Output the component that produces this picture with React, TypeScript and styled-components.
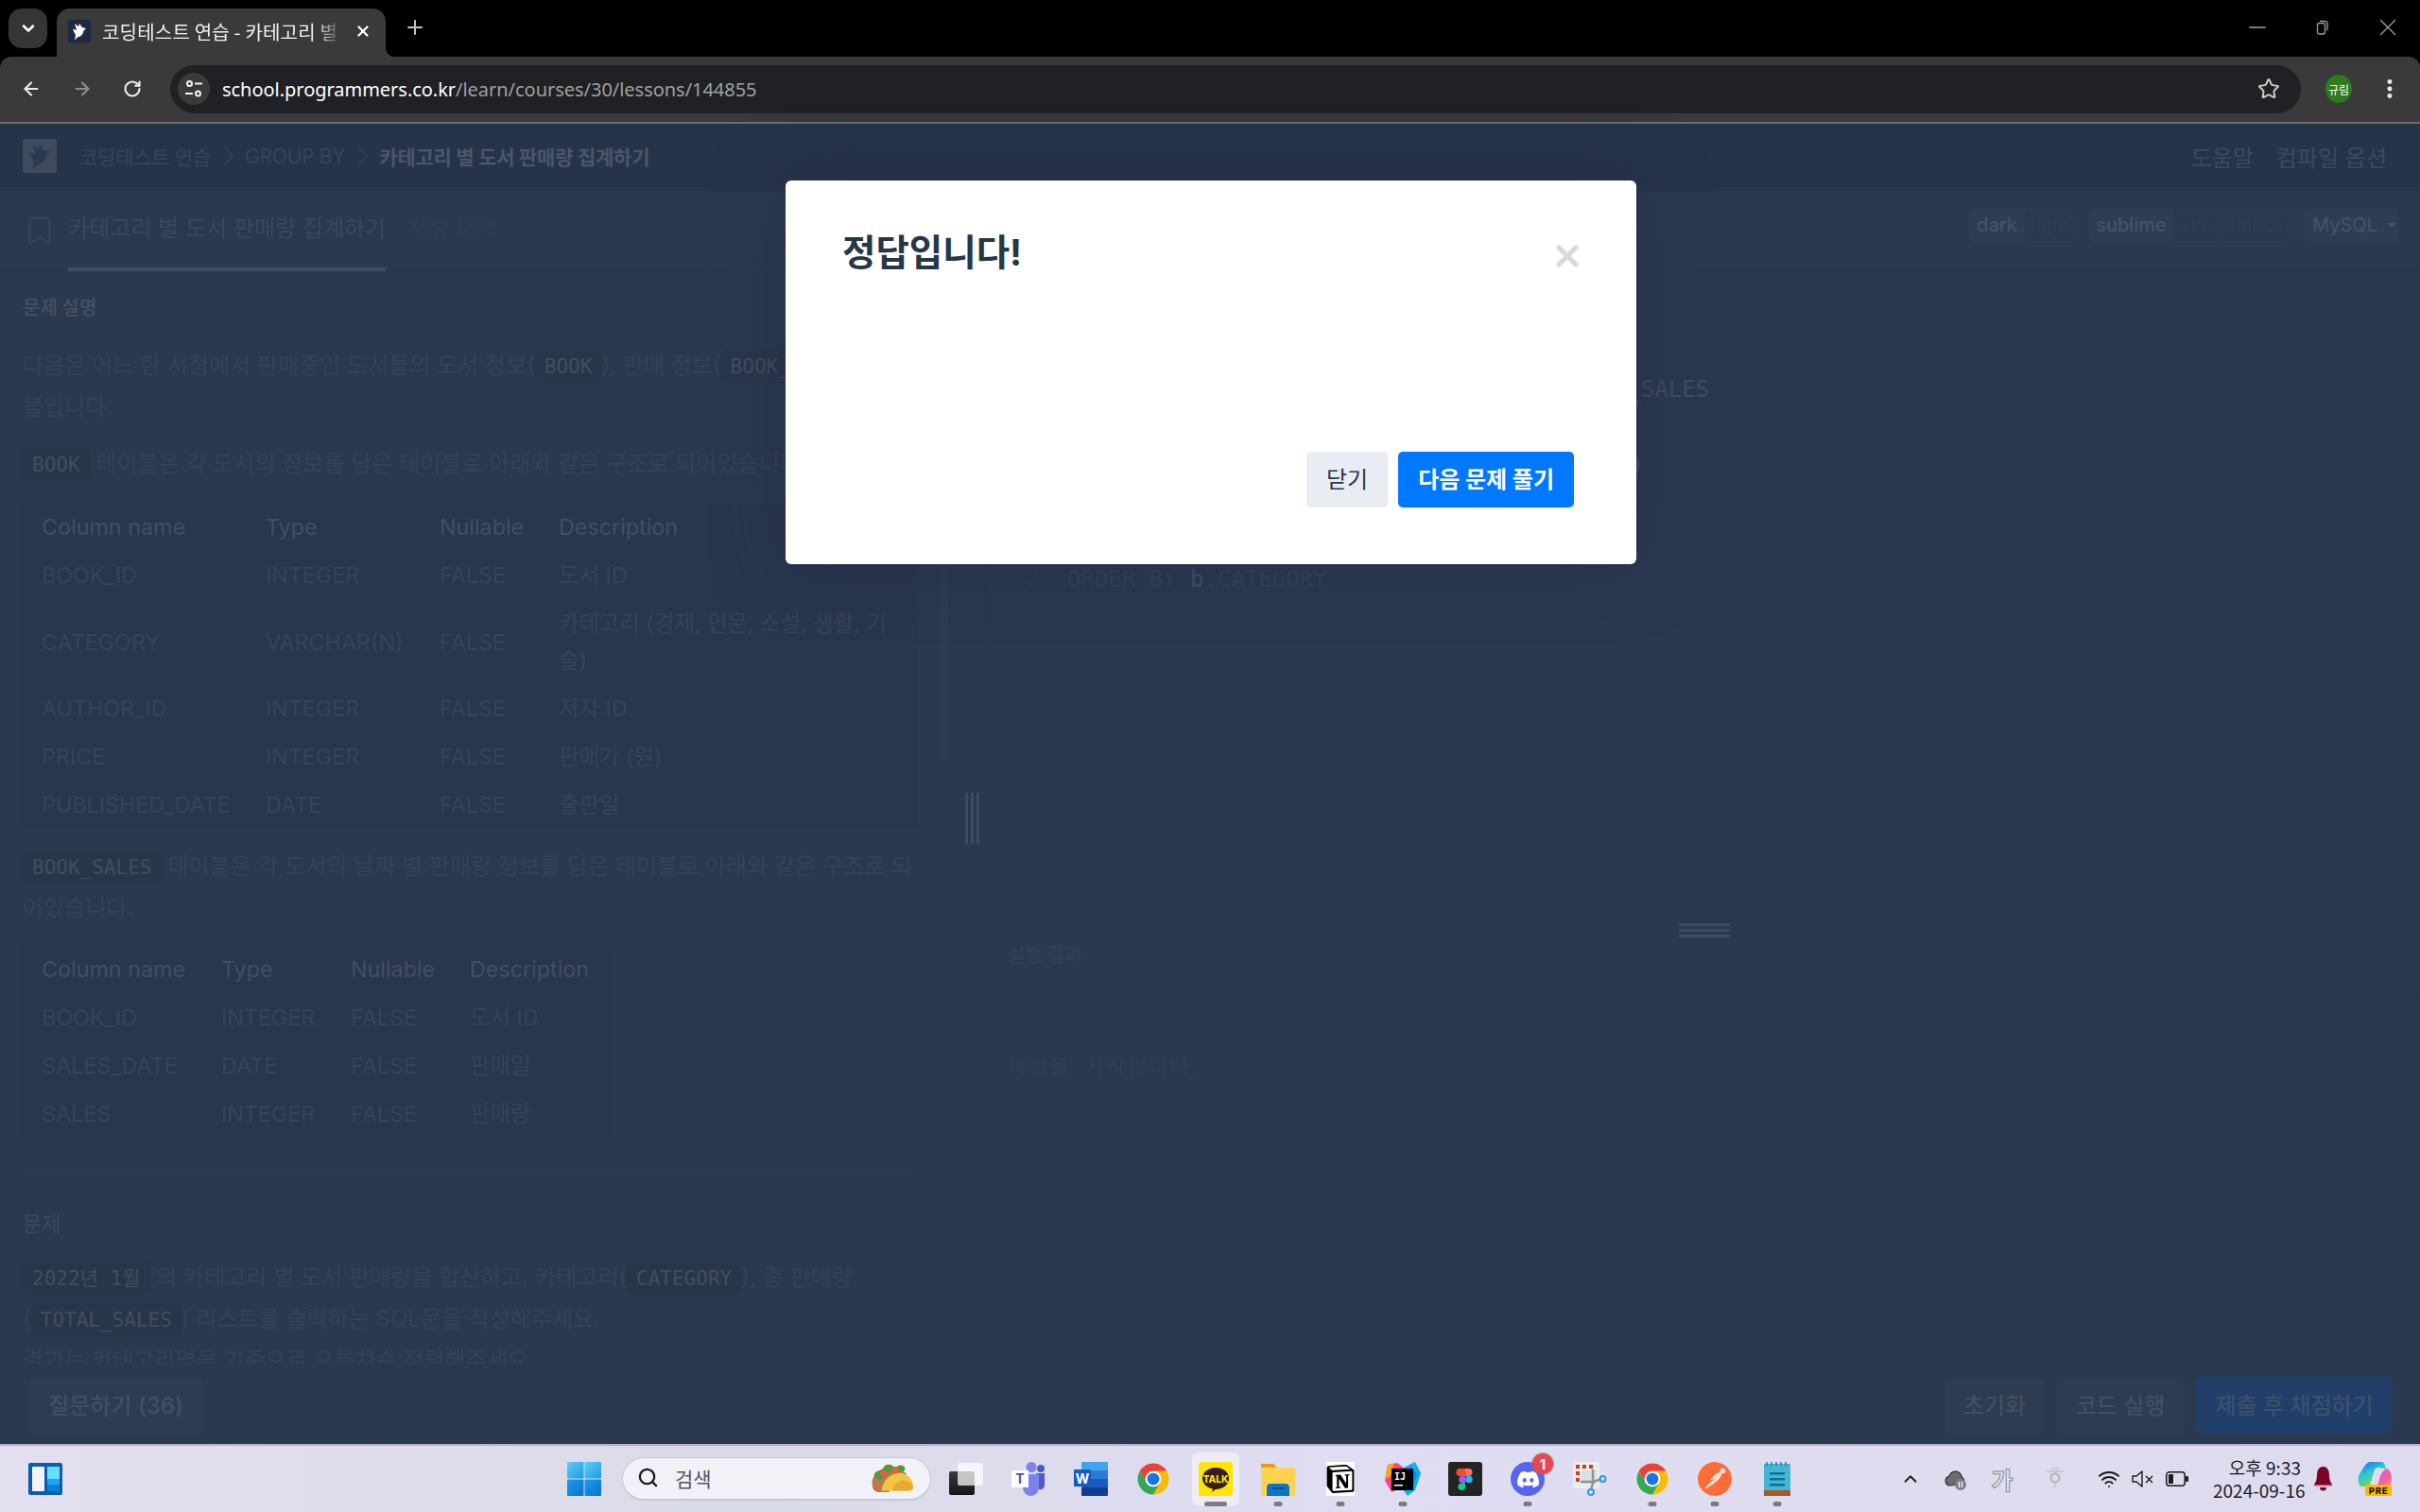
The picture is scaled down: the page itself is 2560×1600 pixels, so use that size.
import React from 'react';
import styled, { createGlobalStyle } from 'styled-components';
import {
  ArrowLeft,
  ArrowRight,
  Bookmark,
  ChevronDown,
  ChevronUp,
  EllipsisVertical,
  Minus,
  Plus,
  RotateCw,
  Search,
  Star,
  Wifi,
  X,
} from 'lucide-react';
import { FaDiscord } from 'react-icons/fa';
import { SiNotion, SiPostman } from 'react-icons/si';

const SANS = `Inter, "Noto Sans CJK KR", sans-serif`;
const MONO = `"DejaVu Sans Mono", "Noto Sans CJK KR", monospace`;

const GlobalStyle = createGlobalStyle`
  html, body {
    margin: 0;
    padding: 0;
    background: #000;
  }
  * {
    box-sizing: border-box;
  }
`;

const Screen = styled.div`
  width: 2560px;
  height: 1600px;
  display: flex;
  flex-direction: column;
  overflow: hidden;
  font-family: ${SANS};
`;

/* browser chrome */
const TabStrip = styled.div`
  height: 60px;
  flex: none;
  display: flex;
  align-items: flex-end;
  padding-left: 9px;
  background: #000;
  color: #fff;
`;

const TabListButton = styled.div`
  width: 41px;
  height: 42px;
  margin-bottom: 9px;
  border-radius: 14px;
  background: #353535;
  display: flex;
  align-items: center;
  justify-content: center;
`;

const Tab = styled.div`
  position: relative;
  width: 348px;
  height: 51px;
  margin-left: 10px;
  padding: 0 15px 3px 12px;
  border-radius: 14px 14px 0 0;
  background: #3a3a3a;
  display: flex;
  align-items: center;
  gap: 12px;

  &::after {
    content: '';
    position: absolute;
    right: -10px;
    bottom: 0;
    width: 10px;
    height: 10px;
    background: radial-gradient(circle at 100% 0, transparent 10px, #3a3a3a 10.5px);
  }
`;

const Favicon = styled.div`
  width: 24px;
  height: 24px;
  flex: none;
  border-radius: 2px;
  background: #1c2b40;
  display: flex;
`;

const TabTitle = styled.div`
  flex: 1;
  overflow: hidden;
  white-space: nowrap;
  font: 400 20px 'Noto Sans CJK KR', sans-serif;
  letter-spacing: 0.2px;
  color: #f1f1f1;
  mask-image: linear-gradient(90deg, #000 88%, transparent);
`;

const NewTab = styled.div`
  margin: 0 0 19px 19px;
  display: flex;
  color: #c4c4c4;
`;

const WindowControls = styled.div`
  margin: 0 0 15px auto;
  display: flex;
  align-items: center;
  color: #a0a0a0;
`;

const WindowControl = styled.div`
  width: 69px;
  height: 32px;
  display: flex;
  align-items: center;
  justify-content: center;
`;

const Toolbar = styled.div`
  height: 71px;
  flex: none;
  padding: 9px 0 10px 22px;
  border-bottom: 2px solid #6b6b6b;
  border-radius: 12px 12px 0 0;
  background: #3a3a3a;
  display: flex;
  align-items: center;
  color: #e6e6e6;
`;

const NavButton = styled.div<{ $dim?: boolean }>`
  width: 54px;
  display: flex;
  color: ${(p) => (p.$dim ? '#8d8d8d' : '#ececec')};
`;

const Omnibox = styled.div`
  width: 2254px;
  height: 51px;
  flex: none;
  margin-left: -4px;
  padding: 0 22px 0 8px;
  border-radius: 26px;
  background: #202124;
  display: flex;
  align-items: center;
`;

const SiteInfo = styled.div`
  width: 34px;
  height: 34px;
  border-radius: 50%;
  background: #3a3a3a;
  display: flex;
  align-items: center;
  justify-content: center;
`;

const Url = styled.div`
  margin-left: 13px;
  flex: 1;
  font: 400 20px 'Noto Sans', sans-serif;
  letter-spacing: -0.03px;
  color: #9fa0a2;
`;

const Host = styled.span`
  color: #fff;
`;

const Avatar = styled.div`
  width: 28px;
  height: 30px;
  flex: none;
  margin-left: 26px;
  border-radius: 50%;
  background: #2f7a1f;
  color: #fff;
  font: 400 12px 'Noto Sans CJK KR', sans-serif;
  display: flex;
  align-items: center;
  justify-content: center;
`;

const MenuButton = styled.div`
  margin-left: 27px;
  display: flex;
  color: #efefef;
`;

/* programmers page (already dimmed by the modal backdrop) */
const Page = styled.div`
  position: relative;
  flex: 1;
  min-height: 0;
  display: flex;
  flex-direction: column;
  background: #2a3850;
`;

const TopBar = styled.div`
  height: 71px;
  flex: none;
  padding: 0 35px 3px 24px;
  background: #26344b;
  display: flex;
  align-items: center;
  font-size: 21px;
  color: #36445b;
`;

const LogoBox = styled.div`
  width: 36px;
  height: 36px;
  margin-right: 24px;
  border-radius: 3px;
  background: #3d4a60;
  display: flex;
`;

const Crumb = styled.span<{ $strong?: boolean }>`
  letter-spacing: -0.25px;
  font-weight: ${(p) => (p.$strong ? 700 : 400)};
  color: ${(p) => (p.$strong ? '#4b566a' : '#36445b')};
`;

const CrumbSep = styled.svg`
  width: 12px;
  height: 22px;
  margin: 0 12px;
  fill: none;
  stroke: #36445b;
  stroke-width: 1.2;
`;

const TopLinks = styled.div`
  margin-left: auto;
  display: flex;
  gap: 24px;
  font-size: 24px;
  color: #3c4960;
`;

const TabBar = styled.div`
  height: 85px;
  flex: none;
  padding: 0 23px 0 24px;
  border-bottom: 1px solid #28364d;
  display: flex;
  align-items: center;
  font-size: 24px;
`;

const TabItem = styled.div<{ $active?: boolean }>`
  height: 85px;
  margin-left: ${(p) => (p.$active ? '12px' : '24px')};
  padding-bottom: 6px;
  border-bottom: 4px solid ${(p) => (p.$active ? '#3f4c68' : 'transparent')};
  display: flex;
  align-items: center;
  color: ${(p) => (p.$active ? '#3a475e' : '#303d56')};
  white-space: nowrap;
`;

const Toggles = styled.div`
  margin: 0 0 12px auto;
  display: flex;
  gap: 13px;
  align-items: center;
`;

const ToggleGroup = styled.div`
  height: 35px;
  display: flex;
  border: 1px solid #2e3c54;
  border-radius: 5px;
  overflow: hidden;
`;

const Toggle = styled.div<{ $on?: boolean; $w: number }>`
  width: ${(p) => p.$w}px;
  display: flex;
  align-items: center;
  justify-content: center;
  font-size: 20px;
  font-weight: ${(p) => (p.$on ? 500 : 400)};
  background: ${(p) => (p.$on ? '#2f3d54' : 'transparent')};
  color: ${(p) => (p.$on ? '#465268' : '#2f3d56')};
  & + & {
    border-left: 1px solid #2e3c54;
  }
`;

const LangSelect = styled.div`
  width: 101px;
  height: 35px;
  padding-left: 10px;
  border-radius: 5px;
  background: #2f3d54;
  display: flex;
  align-items: center;
  font-size: 20px;
  color: #465268;

  &::after {
    content: '';
    margin-left: 10px;
    border: 5px solid transparent;
    border-top-color: #465268;
    border-bottom: 0;
  }
`;

const Workspace = styled.div`
  flex: 1;
  min-height: 0;
  display: grid;
  grid-template-columns: 1003px 39px 1fr;
`;

const Guide = styled.div`
  position: relative;
  overflow: hidden;
  padding: 24px 33px 0 24px;
  font-size: 24px;
  line-height: 44px;
  color: #35425a;
`;

const ScrollThumb = styled.div`
  position: absolute;
  top: 0;
  right: 0;
  width: 9px;
  height: 517px;
  background: #2d3b53;
`;

const SectionTitle = styled.div<{ $plain?: boolean; $mt?: number }>`
  margin-top: ${(p) => p.$mt ?? 0}px;
  font-size: ${(p) => (p.$plain ? '22px' : '20px')};
  line-height: 30px;
  font-weight: ${(p) => (p.$plain ? 400 : 700)};
  color: ${(p) => (p.$plain ? '#3b4860' : '#414d62')};
`;

const Para = styled.p<{ $mt: number }>`
  margin: ${(p) => p.$mt}px 0 0;
`;

const Code = styled.code`
  padding: 5px 10px;
  border-radius: 6px;
  background: #28364c;
  font-family: ${MONO};
  font-size: 21px;
  line-height: 1;
  color: #414d62;
`;

const Table = styled.table<{ $w: number; $mt: number }>`
  width: ${(p) => p.$w}px;
  margin-top: ${(p) => p.$mt}px;
  table-layout: fixed;
  border-collapse: collapse;
  background: #293650;
  font-size: 23.3px;
  line-height: 39px;
`;

const Th = styled.th`
  padding: 6px 0 6px 20px;
  font-weight: 400;
  text-align: left;
  color: #414e63;
  white-space: nowrap;
`;

const Td = styled.td`
  padding: 6px 20px 6px 20px;
  color: #364359;
  white-space: nowrap;
  &:last-child {
    white-space: normal;
    word-break: break-all;
  }
`;

const Rule = styled.hr`
  margin: 38px 0 0;
  border: 0;
  border-top: 1px solid #2e3b53;
`;

const Gutter = styled.div`
  display: flex;
  align-items: center;
  justify-content: flex-end;
  padding-right: 6px;
`;

const VHandle = styled.div`
  width: 15px;
  height: 54px;
  background: repeating-linear-gradient(90deg, #3c4a62 0 3px, transparent 3px 6px);
`;

const RightPane = styled.div`
  position: relative;
  display: flex;
  flex-direction: column;
  min-width: 0;
  border-left: 1px solid #27354c;
`;

const Editor = styled.div`
  height: 683px;
  flex: none;
  padding-top: 65px;
  font-family: 'DejaVu Sans Mono', monospace;
  font-size: 24px;
  line-height: 40.2px;
  color: #35415c;
`;

const CodeLine = styled.div`
  display: flex;
  white-space: pre;
`;

const LineNo = styled.span`
  width: 56px;
  margin-right: 30px;
  text-align: right;
  color: #2f3c54;
`;

const Tok = styled.span<{ $c?: string }>`
  color: ${(p) => p.$c ?? 'inherit'};
`;

const HHandle = styled.div`
  position: absolute;
  top: 690px;
  left: 733px;
  width: 54px;
  height: 15px;
  background: repeating-linear-gradient(180deg, #3c4a62 0 3px, transparent 3px 6px);
`;

const ResultHead = styled.div`
  height: 84px;
  flex: none;
  padding: 0 0 6px 23px;
  border-top: 1px solid #27354c;
  border-bottom: 1px solid #27354c;
  display: flex;
  align-items: center;
  font-size: 20px;
  font-weight: 700;
  color: #323f57;
`;

const ResultBody = styled.div`
  padding: 58px 0 0 23px;
  font-family: 'DejaVu Sans Mono', 'Noto Sans CJK KR', monospace;
  font-size: 21px;
  letter-spacing: 3px;
  color: #333f57;
`;

const Footer = styled.div`
  height: 84px;
  flex: none;
  padding: 13px 29px 11px 30px;
  display: flex;
  align-items: stretch;
  gap: 12px;
`;

const FooterButton = styled.div<{ $w: number; $primary?: boolean; $push?: boolean }>`
  width: ${(p) => p.$w}px;
  margin-left: ${(p) => (p.$push ? 'auto' : 0)};
  padding-bottom: 3px;
  border-radius: 6px;
  background: ${(p) => (p.$primary ? '#223f69' : '#2d3c53')};
  display: flex;
  align-items: center;
  justify-content: center;
  font-size: 24px;
  font-weight: 500;
  color: ${(p) => (p.$primary ? '#3e4f6d' : '#424e63')};
`;

/* modal */
const Backdrop = styled.div`
  position: absolute;
  inset: 0;
  display: flex;
  justify-content: center;
  align-items: flex-start;
  padding: 60px 0 0 2px;
`;

const Modal = styled.div`
  width: 900px;
  height: 406px;
  padding: 50px 66px 60px 60px;
  border-radius: 6px;
  background: #fff;
  box-shadow: 0 0 70px rgba(32, 42, 70, 0.55);
  display: flex;
  flex-direction: column;
  justify-content: space-between;
`;

const ModalHead = styled.div`
  display: flex;
  align-items: flex-start;
  justify-content: space-between;
`;

const ModalTitle = styled.div`
  font-size: 38.5px;
  line-height: 52px;
  font-weight: 700;
  color: #263747;
`;

const ModalClose = styled.div`
  margin: 12px -11px 0 0;
  display: flex;
  color: #d9d9d9;
`;

const ModalActions = styled.div`
  display: flex;
  justify-content: flex-end;
  gap: 11px;
`;

const ModalButton = styled.div<{ $primary?: boolean }>`
  height: 59px;
  padding: 0 21px 4px;
  border-radius: 5px;
  display: flex;
  align-items: center;
  font-size: 24px;
  font-weight: ${(p) => (p.$primary ? 700 : 400)};
  background: ${(p) => (p.$primary ? '#0078ff' : '#e9ecf3')};
  color: ${(p) => (p.$primary ? '#fff' : '#263747')};
`;

/* windows taskbar */
const Taskbar = styled.div`
  height: 72px;
  flex: none;
  padding: 0 30px;
  border-top: 2px solid #b7b3c4;
  background: linear-gradient(90deg, #e4dff0 0%, #dadbe9 30%, #dfddf1 55%, #dedbee 100%);
  display: flex;
  align-items: center;
  color: #1b1b1f;
`;

const TaskIconWrap = styled.div<{ $ml?: number; $w?: number }>`
  width: ${(p) => p.$w ?? 36}px;
  height: 36px;
  flex: none;
  margin-left: ${(p) => p.$ml ?? 0}px;
  display: flex;
  align-items: center;
  justify-content: center;
`;

const SearchBox = styled.div`
  width: 327px;
  height: 46px;
  margin-left: 22px;
  margin-right: 4px;
  padding: 0 17px 2px 15px;
  border-radius: 23px;
  border: 1px solid #c9c7d3;
  border-bottom-width: 2px;
  background: #f2f1f8;
  display: flex;
  align-items: center;
  font: 400 21px 'Noto Sans CJK KR', sans-serif;
  color: #55555c;
`;

const SearchLabel = styled.span`
  margin-left: 17px;
  flex: 1;
`;

const Slot = styled.div`
  position: relative;
  width: 66px;
  height: 56px;
  border-radius: 6px;
  display: flex;
  align-items: center;
  justify-content: center;
`;

const SlotBg = styled.div`
  position: absolute;
  inset: 0 8px;
  border-radius: 6px;
  background: #eeedf7;
`;

const SlotIcon = styled.div`
  position: relative;
  display: flex;
`;

const Dot = styled.div<{ $active?: boolean }>`
  position: absolute;
  bottom: -1px;
  left: 50%;
  transform: translateX(-50%);
  width: ${(p) => (p.$active ? 24 : 9)}px;
  height: 5px;
  border-radius: 3px;
  background: #7b7b80;
`;

const Badge = styled.div`
  position: absolute;
  top: -9px;
  right: -9px;
  width: 22px;
  height: 22px;
  border-radius: 50%;
  background: #e5484f;
  box-shadow: 0 0 0 1px rgba(120, 120, 130, 0.5);
  color: #fff;
  font: 700 15px Inter, sans-serif;
  display: flex;
  align-items: center;
  justify-content: center;
`;

const Tray = styled.div`
  margin-left: auto;
  display: flex;
  align-items: center;
`;

const TrayItem = styled.div<{ $ml: number; $c?: string }>`
  margin-left: ${(p) => p.$ml}px;
  display: flex;
  align-items: center;
  color: ${(p) => p.$c ?? '#1b1b1f'};
`;

const ImeGlyph = styled.div<{ $ml: number; $w: number }>`
  width: ${(p) => p.$w}px;
  margin-left: ${(p) => p.$ml}px;
  font: 700 25px 'Noto Sans CJK KR', sans-serif;
  color: #e6e4ee;
  text-align: center;
  -webkit-text-stroke: 1px #8b8b90;
`;

const Clock = styled.div`
  margin-left: 26px;
  width: 93px;
  text-align: right;
  font: 400 19px/24px 'Noto Sans CJK KR', sans-serif;
  white-space: nowrap;
`;

const BirdIcon = ({ fill }: { fill: string }) => (
  <svg width="100%" height="100%" viewBox="0 0 24 24">
    <path
      fill={fill}
      d="M7 4l4 3 1-3 3 4 4 1-2.500 2.500c-.5 3.500-2.500 6-6.500 7l-3 3 1-5.500C7 14 5.500 11.500 5 9.500L9 11 7 4z"
    />
  </svg>
);

const RestoreIcon = () => (
  <svg width="16" height="16" viewBox="0 0 16 16" fill="none" stroke="currentColor" strokeWidth="1.300">
    <rect x="2.500" y="3.500" width="8" height="11.500" rx="2" />
    <path d="M5 1.300h5c2 0 3 1 3 3v7" />
  </svg>
);

const TuneIcon = () => (
  <svg width="22" height="22" viewBox="0 0 22 22" fill="none" stroke="#f1f1f1" strokeWidth="2">
    <circle cx="6.500" cy="5.500" r="2.500" />
    <path d="M12 5.500h8M2 16h8" />
    <circle cx="15.500" cy="16" r="2.500" />
  </svg>
);

const WidgetsIcon = () => (
  <svg width="36" height="34" viewBox="0 0 36 34">
    <rect width="36" height="34" rx="2" fill="#0a5cad" />
    <rect x="4" y="4" width="13" height="26" rx="1" fill="#f3f3f3" />
    <rect x="20" y="4" width="13" height="13" fill="#6adcff" />
    <rect x="20" y="17" width="13" height="6" fill="#1fa5f5" />
    <rect x="20" y="23" width="13" height="7" fill="#0b7fdc" />
  </svg>
);

const WindowsIcon = () => (
  <svg width="36" height="36" viewBox="0 0 36 36">
    <defs>
      <linearGradient id="winA" x1="0" y1="0" x2="1" y2="1">
        <stop offset="0" stopColor="#5fcff7" />
        <stop offset="1" stopColor="#1a9ae6" />
      </linearGradient>
      <linearGradient id="winB" x1="0" y1="0" x2="1" y2="1">
        <stop offset="0" stopColor="#1f9be8" />
        <stop offset="1" stopColor="#0673cc" />
      </linearGradient>
    </defs>
    <rect width="17.500" height="17.500" rx="1" fill="url(#winA)" />
    <rect x="18.500" width="17.500" height="17.500" rx="1" fill="url(#winA)" />
    <rect y="18.500" width="17.500" height="17.500" rx="1" fill="url(#winB)" />
    <rect x="18.500" y="18.500" width="17.500" height="17.500" rx="1" fill="url(#winB)" />
  </svg>
);

const TacoIcon = () => (
  <svg width="48" height="30" viewBox="0 0 50 40" preserveAspectRatio="none">
    <path d="M4 30C2 16 14 2 30 4l12 10-20 26H10C6 39 4 35 4 30z" fill="#b9794a" />
    <circle cx="12" cy="16" r="6" fill="#4e9a3a" />
    <circle cx="22" cy="7" r="6" fill="#4e9a3a" />
    <circle cx="35" cy="7" r="5" fill="#4e9a3a" />
    <circle cx="17" cy="14" r="4.500" fill="#e2603f" />
    <circle cx="29" cy="9" r="4.500" fill="#e2603f" />
    <path d="M14 38C15 24 24 13 34 13c10 0 15 11 15 20 0 3-2 5-5 5H14z" fill="#f3c640" />
    <path d="M26 38c2-8 6-14 12-15 7 2 11 6 11 11 0 2-2 4-5 4H26z" fill="#e9a92c" />
  </svg>
);

const TaskViewIcon = () => (
  <svg width="36" height="34" viewBox="0 0 36 34">
    <defs>
      <linearGradient id="tvBack" x1="0" y1="0" x2="0" y2="1">
        <stop offset="0" stopColor="#3b3b3b" />
        <stop offset="1" stopColor="#151515" />
      </linearGradient>
    </defs>
    <rect y="9" width="27" height="25" rx="2" fill="url(#tvBack)" />
    <rect x="9" width="27" height="24" rx="2" fill="#fff" fillOpacity="0.72" />
  </svg>
);

const TeamsIcon = () => (
  <svg width="36" height="36" viewBox="0 0 36 36">
    <circle cx="31" cy="7" r="4" fill="#5059c9" />
    <path d="M26 12h9v12c0 4-3 6-6 5z" fill="#5059c9" />
    <circle cx="21" cy="5.500" r="5.500" fill="#7b83eb" />
    <path d="M12 13h17v14c0 5-4 9-8.500 9S12 32 12 27z" fill="#7b83eb" />
    <rect y="9" width="18" height="18" fill="#fff" />
    <text x="9" y="23" textAnchor="middle" fontFamily="Inter, sans-serif" fontWeight="700" fontSize="14" fill="#4b53bc">
      T
    </text>
  </svg>
);

const WordIcon = () => (
  <svg width="36" height="36" viewBox="0 0 36 36">
    <rect x="8" width="28" height="9" fill="#41a5ee" />
    <rect x="8" y="9" width="28" height="9" fill="#2b7cd3" />
    <rect x="8" y="18" width="28" height="9" fill="#185abd" />
    <rect x="8" y="27" width="28" height="9" rx="1" fill="#103f91" />
    <rect y="8" width="18" height="18" rx="1" fill="#185abd" />
    <text x="9" y="22.500" textAnchor="middle" fontFamily="Inter, sans-serif" fontWeight="700" fontSize="14" fill="#fff">
      W
    </text>
  </svg>
);

const ChromeIcon = () => (
  <svg width="36" height="36" viewBox="0 0 48 48">
    <path d="M4.950 13A22 22 0 0 1 43.050 13H24A11 11 0 0 0 14.470 29.500Z" fill="#ea4335" />
    <path d="M43.050 13A22 22 0 0 1 24 46L33.530 29.500A11 11 0 0 0 24 13Z" fill="#fbbc04" />
    <path d="M24 46A22 22 0 0 1 4.950 13L14.470 29.500A11 11 0 0 0 33.530 29.500Z" fill="#34a853" />
    <circle cx="24" cy="24" r="11" fill="#fff" />
    <circle cx="24" cy="24" r="8.500" fill="#1a73e8" />
  </svg>
);

const KakaoIcon = () => (
  <svg width="36" height="36" viewBox="0 0 36 36">
    <rect width="36" height="36" rx="3" fill="#ffe600" />
    <path d="M18 6c8 0 14 5 14 11.500S26 29 18 29l-4 3 1-3.500C9 27.500 4 23 4 17.500 4 11 10 6 18 6z" fill="#3a1d1d" />
    <text x="18" y="21.500" textAnchor="middle" fontFamily="Inter, sans-serif" fontWeight="800" fontSize="10" fill="#ffe600">
      TALK
    </text>
  </svg>
);

const FolderIcon = () => (
  <svg width="36" height="36" viewBox="0 0 36 36">
    <path d="M0 2h13l4 4v6H0z" fill="#e2a20e" />
    <path d="M0 6h36v30H0z" fill="#ffd24f" />
    <path d="M6 36v-9c0-2 1-4 4-4h16c3 0 4 2 4 4v9z" fill="#0c76c4" />
    <rect x="12" y="27" width="12" height="2" fill="#0a4f8a" />
  </svg>
);

const NotionBox = styled.div`
  width: 30px;
  height: 36px;
  background: #fff;
  display: flex;
  align-items: center;
  justify-content: center;
`;

const NotionIcon = () => (
  <NotionBox>
    <SiNotion size={34} color="#000" />
  </NotionBox>
);

const IdeaIcon = () => (
  <svg width="38" height="36" viewBox="0 0 38 36">
    <path d="M3 3l10-2 8 6-6 22-8 3-7-12z" fill="#ff3f8e" />
    <path d="M3 3l7-2-4 14-6 4z" fill="#f8a51a" />
    <path d="M20 6l12-6 6 12-6 18-8 6-6-8z" fill="#0bb0ee" />
    <path d="M26 3l8 10-5 14z" fill="#0a84f0" />
    <rect x="7" y="7" width="23" height="23" fill="#000" />
    <text x="10" y="18.500" fontFamily="'DejaVu Sans Mono', monospace" fontWeight="700" fontSize="10" fill="#fff">
      IJ
    </text>
    <rect x="10" y="24" width="9" height="1.500" fill="#fff" />
  </svg>
);

const FigmaIcon = () => (
  <svg width="36" height="36" viewBox="0 0 36 36">
    <rect width="36" height="36" rx="3" fill="#242424" />
    <path d="M11 7h7v8h-3.500a4 4 0 0 1-3.500-8z" fill="#f24e1e" />
    <path d="M18 7h3.500a4 4 0 0 1 0 8H18z" fill="#ff7262" />
    <circle cx="22" cy="18.500" r="3.800" fill="#1abcfe" />
    <path d="M18 15v7.500h-3.500a3.800 3.800 0 0 1 0-7.500z" fill="#a259ff" />
    <path d="M18 22.500v3.800a3.800 3.800 0 1 1-3.800-3.800z" fill="#0acf83" />
  </svg>
);

const RoundIcon = styled.div<{ $bg: string }>`
  width: 36px;
  height: 36px;
  border-radius: 50%;
  background: ${(p) => p.$bg};
  display: flex;
  align-items: center;
  justify-content: center;
`;

const DiscordIcon = () => (
  <RoundIcon $bg="#5865f2">
    <FaDiscord size={25} color="#fff" />
  </RoundIcon>
);

const SnipIcon = () => (
  <svg width="36" height="36" viewBox="0 0 36 36" fill="none">
    <rect width="28" height="28" rx="3" fill="#ecedf0" />
    <rect x="9" y="9" width="16" height="14" fill="#dcdee3" />
    <path d="M3 3h4v4H3zM10 3h4v4h-4zM17 3h4v4h-4zM3 10h4v4H3zM3 17h4v4H3z" fill="#d8381f" />
    <path d="M8 21h14l8-3" stroke="#8e9297" strokeWidth="2.500" />
    <path d="M21 8v14l-2 8" stroke="#8e9297" strokeWidth="2.500" />
    <circle cx="31.500" cy="18" r="3" stroke="#2e9ae0" strokeWidth="2" />
    <circle cx="19" cy="32" r="3" stroke="#2e9ae0" strokeWidth="2" />
  </svg>
);

const PostmanIcon = () => (
  <RoundIcon $bg="#fff">
    <SiPostman size={36} color="#ff6c37" />
  </RoundIcon>
);

const NotepadIcon = () => (
  <svg width="28" height="36" viewBox="0 0 28 36">
    <rect y="2" width="28" height="30" fill="#45b5d5" />
    <rect y="30" width="28" height="6" fill="#a9582a" />
    <path d="M3 0v4M8 0v4M13 0v4M18 0v4M23 0v4" stroke="#1f7d9e" strokeWidth="1.500" />
    <path d="M6 11h16v2.500H6zM6 17h16v2.500H6zM6 23h16v2.500H6z" fill="#0f6f92" />
  </svg>
);

const CloudIcon = () => (
  <svg width="24" height="24" viewBox="0 0 24 24">
    <path d="M6 19a5 5 0 0 1-.8-9.900A6.500 6.500 0 0 1 18 10a4 4 0 0 1 1 7z" fill="#6d6d70" stroke="#2a2a2c" strokeWidth="1.200" />
    <circle cx="17" cy="18" r="6" fill="#808084" />
    <path d="M15.500 15v6M18.500 15v6" stroke="#fff" strokeWidth="1.300" />
  </svg>
);

const HangulTrayIcon = () => (
  <svg width="20" height="24" viewBox="0 0 20 24" fill="none" stroke="#fff" strokeWidth="1.800">
    <path d="M1 4h18M6 1h8" stroke="#c9c9cc" />
    <circle cx="10" cy="11" r="4.500" stroke="#aeaeb2" />
    <path d="M10 17v5" stroke="#c9c9cc" />
  </svg>
);

const SpeakerIcon = () => (
  <svg width="23" height="24" viewBox="0 0 23 24" fill="none" stroke="#1b1b1f" strokeWidth="1.400">
    <path d="M1 9v6h4l6 5V4L5 9z" strokeLinejoin="round" />
    <path d="M15 9l7 7M22 9l-7 7" />
  </svg>
);

const BatteryIcon = () => (
  <svg width="24" height="18" viewBox="0 0 24 18">
    <rect x="0.800" y="1.800" width="19.400" height="14.400" rx="3" fill="none" stroke="#1b1b1f" strokeWidth="1.500" />
    <rect x="3" y="4" width="5" height="10" rx="1" fill="#1b1b1f" />
    <rect x="21" y="6" width="3" height="6" rx="1" fill="#1b1b1f" />
  </svg>
);

const BellIcon = () => (
  <svg width="19" height="26" viewBox="0 0 19 26">
    <path d="M9.500 0C14 0 16 4 16 9c0 4 1 7 3 10H0c2-3 3-6 3-10C3 4 5 0 9.500 0z" fill="#7d0028" />
    <path d="M6 22h7a3.500 3.500 0 0 1-7 0z" fill="#7d0028" />
    <rect y="19" width="19" height="1.500" fill="#c75a80" />
  </svg>
);

const CopilotIcon = () => (
  <svg width="36" height="36" viewBox="0 0 36 36">
    <defs>
      <linearGradient id="copA" x1="0" y1="0" x2="0.500" y2="1">
        <stop offset="0" stopColor="#1467e0" />
        <stop offset="0.500" stopColor="#2bc7d8" />
        <stop offset="1" stopColor="#7fd63f" />
      </linearGradient>
      <linearGradient id="copB" x1="0" y1="0" x2="1" y2="1">
        <stop offset="0" stopColor="#b36ae8" />
        <stop offset="0.600" stopColor="#f05fa8" />
        <stop offset="1" stopColor="#ffb347" />
      </linearGradient>
    </defs>
    <path d="M14 0h11c3 0 4 3 5 7l-8-1c-3 0-4 2-5 5l-3 10c-1 3-3 5-6 5H3c-3-4-3-9-1-13l5-8c2-3 4-5 7-5z" fill="url(#copA)" />
    <path d="M30 7c3 0 6 5 6 10 0 7-4 14-12 14h-9c3-1 5-3 6-6l3-10c1-3 3-5 6-8z" fill="url(#copB)" />
    <rect x="8" y="24" width="28" height="12" rx="2" fill="#ffb900" />
    <text x="22" y="33.500" textAnchor="middle" fontFamily="Inter, sans-serif" fontWeight="800" fontSize="9.500" letterSpacing="0.800" fill="#111">
      PRE
    </text>
  </svg>
);

const bookColumns = [237, 184, 126, 399];
const bookRows = [
  ['BOOK_ID', 'INTEGER', 'FALSE', '도서 ID'],
  ['CATEGORY', 'VARCHAR(N)', 'FALSE', '카테고리 (경제, 인문, 소설, 생활, 기술)'],
  ['AUTHOR_ID', 'INTEGER', 'FALSE', '저자 ID'],
  ['PRICE', 'INTEGER', 'FALSE', '판매가 (원)'],
  ['PUBLISHED_DATE', 'DATE', 'FALSE', '출판일'],
];
const salesColumns = [190, 137, 126, 167];
const salesRows = [
  ['BOOK_ID', 'INTEGER', 'FALSE', '도서 ID'],
  ['SALES_DATE', 'DATE', 'FALSE', '판매일'],
  ['SALES', 'INTEGER', 'FALSE', '판매량'],
];

const SchemaTable = ({ columns, rows, mt }: { columns: number[]; rows: string[][]; mt: number }) => (
  <Table $w={columns.reduce((a, b) => a + b, 0)} $mt={mt}>
    <colgroup>
      {columns.map((w, i) => (
        <col key={i} width={w} />
      ))}
    </colgroup>
    <thead>
      <tr>
        <Th>Column name</Th>
        <Th>Type</Th>
        <Th>Nullable</Th>
        <Th>Description</Th>
      </tr>
    </thead>
    <tbody>
      {rows.map((row) => (
        <tr key={row[0]}>
          {row.map((cell, i) => (
            <Td key={i}>{cell}</Td>
          ))}
        </tr>
      ))}
    </tbody>
  </Table>
);

const sqlLines = [
  '-- 코드를 입력하세요',
  'SELECT b.CATEGORY, SUM(s.SALES) AS  TOTAL_SALES',
  'FROM BOOK b',
  'JOIN BOOK_SALES s ON b.BOOK_ID = s.BOOK_ID',
  "WHERE s.SALES_DATE LIKE '2022-01%'",
  'GROUP BY b.CATEGORY',
];

const dockIcons: { key: string; icon: React.ReactNode; dot?: boolean; active?: boolean; badge?: string }[] = [
  { key: 'taskview', icon: <TaskViewIcon /> },
  { key: 'teams', icon: <TeamsIcon /> },
  { key: 'word', icon: <WordIcon /> },
  { key: 'chrome', icon: <ChromeIcon /> },
  { key: 'kakao', icon: <KakaoIcon />, dot: true, active: true },
  { key: 'folder', icon: <FolderIcon />, dot: true },
  { key: 'notion', icon: <NotionIcon />, dot: true },
  { key: 'idea', icon: <IdeaIcon />, dot: true },
  { key: 'figma', icon: <FigmaIcon /> },
  { key: 'discord', icon: <DiscordIcon />, dot: true, badge: '1' },
  { key: 'snip', icon: <SnipIcon /> },
  { key: 'chrome2', icon: <ChromeIcon />, dot: true },
  { key: 'postman', icon: <PostmanIcon />, dot: true },
  { key: 'notepad', icon: <NotepadIcon />, dot: true },
];

export default function App() {
  return (
    <Screen>
      <GlobalStyle />
      <TabStrip>
        <TabListButton>
          <ChevronDown size={20} strokeWidth={3} />
        </TabListButton>
        <Tab>
          <Favicon>
            <BirdIcon fill="#fff" />
          </Favicon>
          <TabTitle>코딩테스트 연습 - 카테고리 별 도서</TabTitle>
          <X size={18} strokeWidth={3} />
        </Tab>
        <NewTab>
          <Plus size={24} strokeWidth={2} />
        </NewTab>
        <WindowControls>
          <WindowControl>
            <Minus size={28} strokeWidth={1.2} />
          </WindowControl>
          <WindowControl>
            <RestoreIcon />
          </WindowControl>
          <WindowControl>
            <X size={30} strokeWidth={1} />
          </WindowControl>
        </WindowControls>
      </TabStrip>
      <Toolbar>
        <NavButton>
          <ArrowLeft size={22} strokeWidth={2.4} />
        </NavButton>
        <NavButton $dim>
          <ArrowRight size={22} strokeWidth={2.4} />
        </NavButton>
        <NavButton>
          <RotateCw size={20} strokeWidth={2.6} />
        </NavButton>
        <Omnibox>
          <SiteInfo>
            <TuneIcon />
          </SiteInfo>
          <Url>
            <Host>school.programmers.co.kr</Host>/learn/courses/30/lessons/144855
          </Url>
          <Star size={24} strokeWidth={2} color="#c9c9c9" />
        </Omnibox>
        <Avatar>규림</Avatar>
        <MenuButton>
          <EllipsisVertical size={26} strokeWidth={2.6} />
        </MenuButton>
      </Toolbar>

      <Page>
        <TopBar>
          <LogoBox>
            <BirdIcon fill="#2a3850" />
          </LogoBox>
          <Crumb>코딩테스트 연습</Crumb>
          <CrumbSep viewBox="0 0 12 22">
            <path d="M2 1l9 10-9 10" />
          </CrumbSep>
          <Crumb>GROUP BY</Crumb>
          <CrumbSep viewBox="0 0 12 22">
            <path d="M2 1l9 10-9 10" />
          </CrumbSep>
          <Crumb $strong>카테고리 별 도서 판매량 집계하기</Crumb>
          <TopLinks>
            <span>도움말</span>
            <span>컴파일 옵션</span>
          </TopLinks>
        </TopBar>
        <TabBar>
          <Bookmark size={36} color="#36445c" strokeWidth={1.5} />
          <TabItem $active>카테고리 별 도서 판매량 집계하기</TabItem>
          <TabItem>제출 내역</TabItem>
          <Toggles>
            <ToggleGroup>
              <Toggle $on $w={57}>
                dark
              </Toggle>
              <Toggle $w={55}>light</Toggle>
            </ToggleGroup>
            <ToggleGroup>
              <Toggle $on $w={87}>
                sublime
              </Toggle>
              <Toggle $w={48}>vim</Toggle>
              <Toggle $w={76}>emacs</Toggle>
            </ToggleGroup>
            <LangSelect>MySQL</LangSelect>
          </Toggles>
        </TabBar>
        <Workspace>
          <Guide>
            <ScrollThumb />
            <SectionTitle>문제 설명</SectionTitle>
            <Para $mt={24}>
              다음은 어느 한 서점에서 판매중인 도서들의 도서 정보(<Code>BOOK</Code>), 판매 정보(<Code>BOOK_SALES</Code>) 테이블입니다.
            </Para>
            <Para $mt={16}>
              <Code>BOOK</Code> 테이블은 각 도서의 정보를 담은 테이블로 아래와 같은 구조로 되어있습니다.
            </Para>
            <SchemaTable columns={bookColumns} rows={bookRows} mt={19} />
            <Para $mt={18}>
              <Code>BOOK_SALES</Code> 테이블은 각 도서의 날짜 별 판매량 정보를 담은 테이블로 아래와 같은 구조로 되어있습니다.
            </Para>
            <SchemaTable columns={salesColumns} rows={salesRows} mt={17} />
            <Rule />
            <SectionTitle $plain $mt={37}>
              문제
            </SectionTitle>
            <Para $mt={20}>
              <Code>2022년 1월</Code> 의 카테고리 별 도서 판매량을 합산하고, 카테고리(<Code>CATEGORY</Code>), 총 판매량 (<Code>TOTAL_SALES</Code>) 리스트를 출력하는 SQL문을 작성해주세요.
            </Para>
            <Para $mt={0}>결과는 카테고리명을 기준으로 오름차순 정렬해주세요.</Para>
          </Guide>
          <Gutter>
            <VHandle />
          </Gutter>
          <RightPane>
            <Editor>
              {sqlLines.map((line, i) => (
                <CodeLine key={i}>
                  <LineNo>{i + 1}</LineNo>
                  <Tok $c="#404c61">{line}</Tok>
                </CodeLine>
              ))}
              <CodeLine>
                <LineNo>7</LineNo>
                <Tok>ORDER BY </Tok>
                <Tok $c="#465162">b</Tok>
                <Tok>.CATEGORY</Tok>
              </CodeLine>
            </Editor>
            <HHandle />
            <ResultHead>실행 결과</ResultHead>
            <ResultBody>채점을 시작합니다.</ResultBody>
          </RightPane>
        </Workspace>
        <Footer>
          <FooterButton $w={185}>질문하기 (36)</FooterButton>
          <FooterButton $w={106} $push>
            초기화
          </FooterButton>
          <FooterButton $w={136}>코드 실행</FooterButton>
          <FooterButton $w={208} $primary>
            제출 후 채점하기
          </FooterButton>
        </Footer>
        <Backdrop>
          <Modal>
            <ModalHead>
              <ModalTitle>정답입니다!</ModalTitle>
              <ModalClose>
                <X size={36} strokeWidth={3.5} />
              </ModalClose>
            </ModalHead>
            <ModalActions>
              <ModalButton>닫기</ModalButton>
              <ModalButton $primary>다음 문제 풀기</ModalButton>
            </ModalActions>
          </Modal>
        </Backdrop>
      </Page>

      <Taskbar>
        <TaskIconWrap>
          <WidgetsIcon />
        </TaskIconWrap>
        <TaskIconWrap $ml={534}>
          <WindowsIcon />
        </TaskIconWrap>
        <SearchBox>
          <Search size={23} strokeWidth={2.4} color="#1b1b1f" />
          <SearchLabel>검색</SearchLabel>
          <TacoIcon />
        </SearchBox>
        {dockIcons.map((item) => (
          <Slot key={item.key}>
            {item.active && <SlotBg />}
            <SlotIcon>
              {item.icon}
              {item.badge && <Badge>{item.badge}</Badge>}
            </SlotIcon>
            {item.dot && <Dot $active={item.active} />}
          </Slot>
        ))}
        <Tray>
          <TrayItem $ml={0}>
            <ChevronUp size={22} strokeWidth={2} />
          </TrayItem>
          <TrayItem $ml={25}>
            <CloudIcon />
          </TrayItem>
          <ImeGlyph $ml={25} $w={24}>
            가
          </ImeGlyph>
          <TrayItem $ml={34}>
            <HangulTrayIcon />
          </TrayItem>
          <TrayItem $ml={35}>
            <Wifi size={24} strokeWidth={2} />
          </TrayItem>
          <TrayItem $ml={12}>
            <SpeakerIcon />
          </TrayItem>
          <TrayItem $ml={13}>
            <BatteryIcon />
          </TrayItem>
          <Clock>
            오후 9:33
            <br />
            2024-09-16
          </Clock>
          <TrayItem $ml={14}>
            <BellIcon />
          </TrayItem>
          <TrayItem $ml={27}>
            <CopilotIcon />
          </TrayItem>
        </Tray>
      </Taskbar>
    </Screen>
  );
}
